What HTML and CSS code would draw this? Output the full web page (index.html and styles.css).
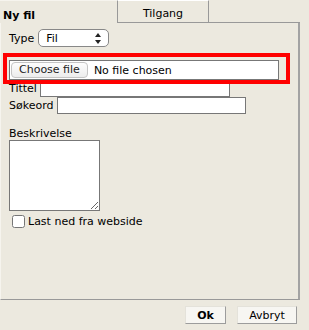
FILE: index.html
```html
<!DOCTYPE html>
<html lang="no">
  <head>
    <meta charset="UTF-8" />
    <meta name="viewport" content="width=device-width, initial-scale=1.0" />
    <title>Ny fil</title>
    <link rel="stylesheet" href="styles.css">
  </head>
  <body>
    <div class="dialog">
      <div class="tabs">
        <div class="tab tab-active">Ny fil</div>
        <div class="tab">Tilgang</div>
        <div class="tab-rest"></div>
      </div>
      <div class="panel">
        <div class="type-row">
          <label for="type">Type</label>
          <span class="select-wrap">
            <select id="type" name="type">
              <option>Fil</option>
            </select>
            <svg class="select-arrows" width="6" height="11" viewBox="0 0 6 11">
              <path d="M3 0 L6 4 L0 4 Z M3 11 L6 7 L0 7 Z" fill="#222" />
            </svg>
          </span>
        </div>
        <div class="file-row">
          <div class="file-input">
            <label class="file-btn" for="file">Choose file</label>
            <span class="file-name">No file chosen</span>
            <input type="file" id="file" name="file" class="file-hidden" />
          </div>
        </div>
        <div class="field-row">
          <label for="title">Tittel</label>
          <input type="text" id="title" name="title" class="title-input" />
        </div>
        <div class="field-row">
          <label for="keywords">Søkeord</label>
          <input type="text" id="keywords" name="keywords" class="keyword-input" />
        </div>
        <label class="desc-label" for="desc">Beskrivelse</label>
        <textarea id="desc" name="desc"></textarea>
        <div class="check-row">
          <input type="checkbox" id="fromweb" name="fromweb" />
          <label for="fromweb">Last ned fra webside</label>
        </div>
      </div>
      <div class="buttons">
        <button class="btn btn-ok" type="button">Ok</button>
        <button class="btn btn-cancel" type="button">Avbryt</button>
      </div>
    </div>
  </body>
</html>
```

FILE: styles.css
```css
body {
  margin: 0;
  background-color: #ece9df;
  font-family: "DejaVu Sans", Verdana, sans-serif;
  font-size: 11px;
  color: #000;
}
.dialog {
  width: 309px;
}
.tabs {
  display: flex;
  height: 23px;
  width: 300px;
}
.tab {
  box-sizing: border-box;
  height: 23px;
  width: 92px;
  padding-top: 6px;
  text-align: center;
  border: 1px solid #999;
  border-top-color: #fff;
}
.tab-active {
  width: 117px;
  padding: 8px 0 0 3px;
  text-align: left;
  font-weight: bold;
  border: none;
  border-top: 1px solid #f6f4ee;
}
.tab-rest {
  flex: 1;
  border-bottom: 1px solid #999;
}
.panel {
  box-sizing: border-box;
  width: 300px;
  height: 277px;
  padding-left: 8px;
  border-left: 1px solid #f6f4ee;
  border-right: 2px solid #a3a3a3;
  border-bottom: 1px solid #999;
}
.type-row {
  display: flex;
  align-items: center;
  gap: 4px;
  padding-top: 6px;
}
.select-wrap {
  position: relative;
  display: inline-block;
}
select {
  appearance: none;
  -webkit-appearance: none;
  width: 71px;
  height: 18px;
  margin: 0;
  padding: 0 0 0 7px;
  border: 1px solid #888;
  border-radius: 5px;
  background: #fff;
  font-family: "DejaVu Sans", Verdana, sans-serif;
  font-size: 11px;
  color: #000;
}
.select-arrows {
  position: absolute;
  right: 8px;
  top: 4px;
  pointer-events: none;
}
.file-row {
  box-sizing: border-box;
  width: 279px;
  height: 23px;
  margin: 10px 0 0 -2px;
  padding: 3px 0 0 2px;
  outline: 4px solid #ff0000;
  position: relative;
  z-index: 1;
}
.file-input {
  box-sizing: border-box;
  display: flex;
  align-items: center;
  width: 270px;
  height: 20px;
  padding: 0 1px;
  border: 1px solid #777;
  background: #fff;
}
.file-btn {
  box-sizing: border-box;
  height: 16px;
  line-height: 14px;
  margin-right: 6px;
  padding: 0 7px;
  border: 1px solid #c4c4c4;
  border-radius: 4px;
  background: linear-gradient(#fdfdfd, #ececec);
  color: #222;
}
.file-hidden {
  display: none;
}
.field-row {
  display: flex;
  align-items: center;
  height: 17px;
}
.field-row label {
  margin-right: 3px;
}
input[type="text"] {
  box-sizing: border-box;
  height: 17px;
  margin: 0;
  border: 1px solid #777;
  background: #fff;
}
.title-input {
  width: 190px;
}
.keyword-input {
  width: 189px;
}
.desc-label {
  display: block;
  margin-top: 13px;
  line-height: 13px;
}
textarea {
  display: block;
  box-sizing: border-box;
  width: 91px;
  height: 71px;
  margin: 0;
  border: 1px solid #777;
  background: #fff;
}
.check-row {
  display: flex;
  align-items: center;
  gap: 3px;
  margin: 4px 0 0 3px;
}
.check-row input {
  width: 13px;
  height: 13px;
  margin: 0;
}
.buttons {
  display: flex;
  justify-content: flex-end;
  gap: 11px;
  width: 297px;
  padding-top: 6px;
}
.btn {
  box-sizing: border-box;
  height: 18px;
  padding: 0;
  border: 1px solid;
  border-color: #e4e2da #9c9c9c #9c9c9c #e4e2da;
  background: #f7f6f2;
  font-family: "DejaVu Sans", Verdana, sans-serif;
  font-size: 11px;
  color: #000;
}
.btn-ok {
  width: 41px;
  font-weight: bold;
}
.btn-cancel {
  width: 60px;
}
```
